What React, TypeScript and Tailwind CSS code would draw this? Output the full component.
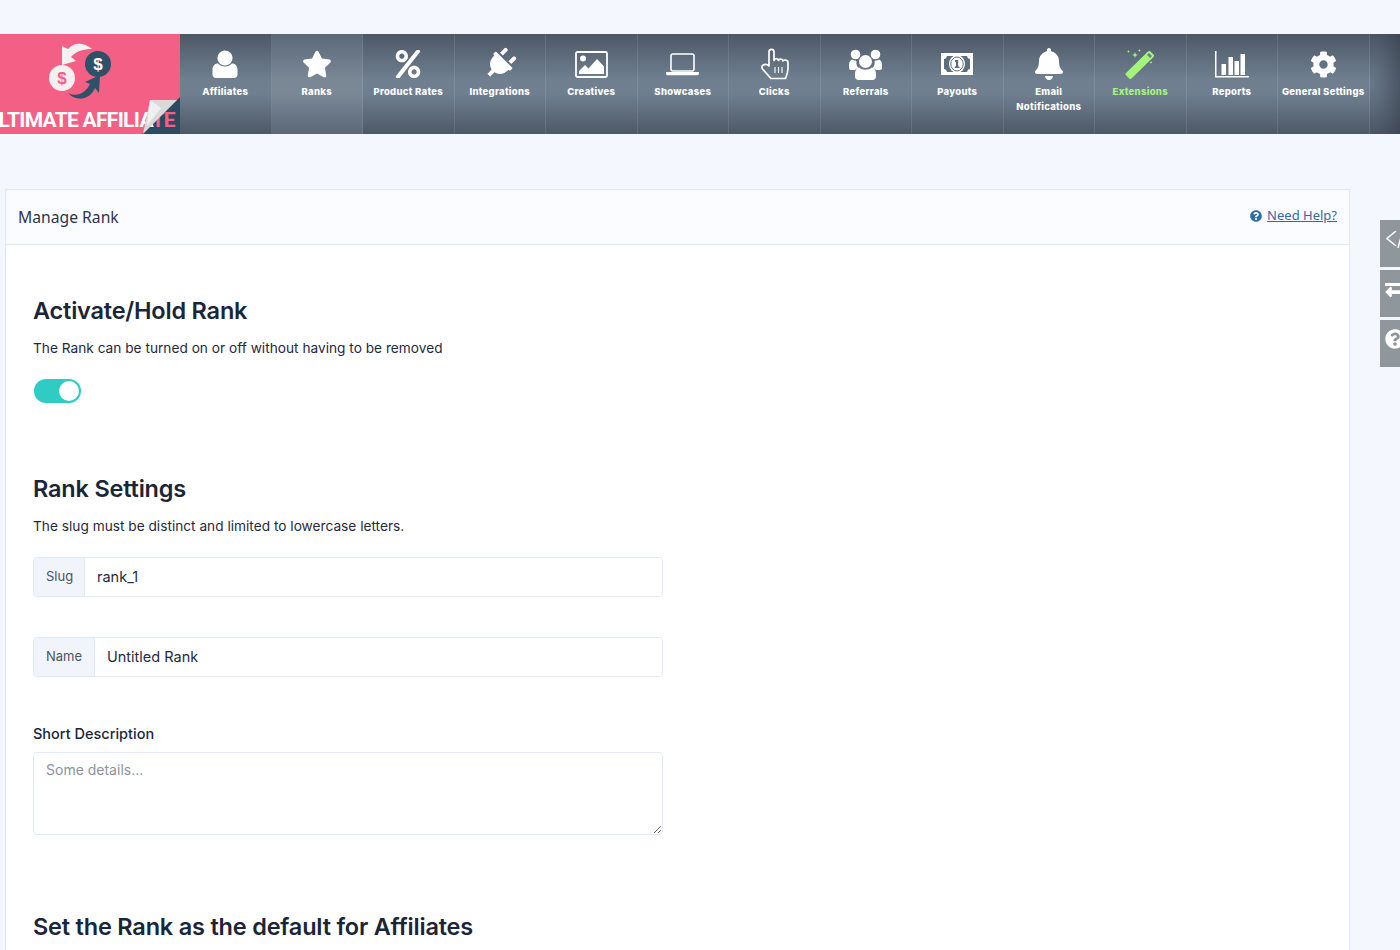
import { FaStar, FaPercent, FaPlug, FaBell, FaCog, FaQuestionCircle, FaLongArrowAltLeft } from 'react-icons/fa';

const UserIcon = () => (
  <svg width="26" height="28" viewBox="0 0 26 28" fill="white">
    <circle cx="13" cy="8" r="7.6" />
    <path d="M6 13.5c2 2 4.2 3 7 3s5-1 7-3c3.400 0 5.500 2.500 5.500 6.500v4.500c0 2-1.500 3.500-3.500 3.500H4c-2 0-3.500-1.500-3.500-3.500V20c0-4 2.100-6.500 5.500-6.500z" />
  </svg>
);

const ImageIcon = () => (
  <svg width="33" height="27" viewBox="0 0 33 27">
    <rect x="1" y="1" width="31" height="25" rx="1.500" fill="none" stroke="white" strokeWidth="1.800" />
    <circle cx="8" cy="7.500" r="3" fill="white" />
    <path d="M4 23v-3l6-6 3.500 3.500L22 8l7 7.500V23z" fill="white" />
  </svg>
);

const LaptopIcon = () => (
  <svg width="33" height="23" viewBox="0 0 33 23">
    <rect x="5" y="1" width="23" height="17" rx="2" fill="none" stroke="white" strokeWidth="1.600" />
    <path d="M0 19h33v1.500c0 1-.8 1.800-1.800 1.800H1.800C.8 22.300 0 21.500 0 20.500z" fill="white" />
  </svg>
);

const HandIcon = () => (
  <svg width="29" height="32" viewBox="0 0 29 32" fill="none" stroke="white" strokeWidth="1.700" strokeLinejoin="round">
    <path d="M9 18V4c0-3.500 5-3.500 5 0v8.500c.5-2.500 4-2.500 4.500 0 .5-2 4-2 4.500.5.500-1.500 5-1.500 5 1.500v6c0 4-1 6.500-2.500 10H11L2.500 21c-2.500-3.500 3-6.500 6.500-3z" />
    <path d="M15 19v6M18.500 19v6M22 19v6" strokeWidth="1.100" />
  </svg>
);

const UsersIcon = () => (
  <svg width="33" height="31" viewBox="0 0 33 31" fill="white">
    <circle cx="6.500" cy="5.500" r="4.800" />
    <circle cx="26.500" cy="5.500" r="4.800" />
    <path d="M0 17c0-4 1-6 3-6.500 1 .8 2 1 3.500 1l1 1c-.5 3 .5 5 2 6.500-1.500.5-2.500 1-3.500 2H2c-1.200 0-2-1-2-2zM33 17c0-4-1-6-3-6.500-1 .8-2 1-3.500 1l-1 1c.5 3-.5 5-2 6.500 1.500.5 2.500 1 3.500 2h4c1.200 0 2-1 2-2z" />
    <circle cx="16.500" cy="12.500" r="6.500" />
    <path d="M10 18.500c2 1.500 4 2.200 6.500 2.200s4.500-.7 6.500-2.200c2.500.5 4 3 4 6.500v2.500c0 2-1.500 3.500-3.500 3.500h-14C7.500 31 6 29.500 6 27.500V25c0-3.500 1.500-6 4-6.500z" />
  </svg>
);

const MoneyIcon = () => (
  <svg width="32" height="22" viewBox="0 0 32 22">
    <rect width="32" height="22" fill="white" />
    <path d="M6 3h20c.5 2 1.500 2.800 3 3v10c-1.500.2-2.500 1-3 3H6c-.5-2-1.500-2.800-3-3V6c1.500-.2 2.500-1 3-3z" fill="#5f6e7d" />
    <ellipse cx="16" cy="11" rx="8" ry="9" fill="white" />
    <ellipse cx="16" cy="11" rx="6.200" ry="7" fill="none" stroke="#5f6e7d" strokeWidth="1" />
    <path d="M14 7h3.200v6.500h1.300V15h-4.700v-1.500h1.200V9l-1 .3z" fill="#5f6e7d" />
  </svg>
);

const WandIcon = () => (
  <svg width="30" height="30" viewBox="0 0 30 30" fill="#a5f47a">
    <path d="M1 24 23 2.500c.8-.8 1.800-.8 2.500 0l3 3c.7.700.7 1.700 0 2.500L6.500 29.500c-.7.700-1.500.7-2.200 0L1 26.200c-.7-.7-.7-1.500 0-2.200z" />
    <path d="M22 6l3 3 2-2-3-3z" fill="#6d7d8c" />
    <path d="M10 3l.8 2.200L13 6l-2.200.8L10 9l-.8-2.200L7 6l2.200-.8zM3.500 1l.4 1.100L5 2.500l-1.100.4L3.500 4l-.4-1.100L2 2.500l1.100-.4zM14.500 0l.4 1.100 1.100.4-1.100.4-.4 1.100-.4-1.100-1.100-.4 1.100-.4zM26 12l.4 1.100 1.100.4-1.100.4-.4 1.100-.4-1.100-1.100-.4 1.100-.4z" />
  </svg>
);

const ReportsIcon = () => (
  <svg width="34" height="27" viewBox="0 0 34 27" fill="white">
    <path d="M0 0h1.500v25H34v1.500H0z" />
    <rect x="6.500" y="13" width="4.500" height="11" />
    <rect x="13.500" y="6" width="4.500" height="18" />
    <rect x="19.500" y="10" width="4.500" height="14" />
    <rect x="25.500" y="3" width="4.500" height="21" />
  </svg>
);

const navItems = [
  { label: 'Affiliates', icon: <UserIcon /> },
  { label: 'Ranks', icon: <FaStar size={30} color="white" />, active: true },
  { label: 'Product Rates', icon: <FaPercent size={28} color="white" /> },
  { label: 'Integrations', icon: <FaPlug size={32} color="white" className="rotate-45" /> },
  { label: 'Creatives', icon: <ImageIcon /> },
  { label: 'Showcases', icon: <LaptopIcon /> },
  { label: 'Clicks', icon: <HandIcon /> },
  { label: 'Referrals', icon: <UsersIcon /> },
  { label: 'Payouts', icon: <MoneyIcon /> },
  { label: 'Email Notifications', icon: <FaBell size={32} color="white" /> },
  { label: 'Extensions', icon: <WandIcon />, green: true },
  { label: 'Reports', icon: <ReportsIcon /> },
  { label: 'General Settings', icon: <FaCog size={27} color="white" /> },
];

const Logo = () => (
  <div className="relative w-[180px] h-full shrink-0 overflow-hidden bg-[#f45f85]">
    <svg className="absolute left-[48px] top-[6px]" width="66" height="62" viewBox="0 0 66 62">
      <path d="M44 9C36 2 26 2 20 9l-6-3 0 19 14-4-5-4c5-6 13-8 21-8z" fill="#f2f2f2" />
      <circle cx="14" cy="38" r="13" fill="#f5f0f0" />
      <circle cx="50" cy="24" r="13" fill="#2e5068" />
      <path d="M20 53C30 58 38 52 42 44l-5-2 15-7-1 18-4-5C42 60 28 62 20 53z" fill="#2e5068" />
      <text x="14" y="44" textAnchor="middle" fontSize="17" fontWeight="700" fill="#f45f85" fontFamily="Liberation Sans, sans-serif">$</text>
      <text x="50" y="30" textAnchor="middle" fontSize="17" fontWeight="700" fill="white" fontFamily="Liberation Sans, sans-serif">$</text>
    </svg>
    <svg className="absolute right-0 bottom-0" width="38" height="37" viewBox="0 0 38 37">
      <path d="M38 0V37H0z" fill="#2e4a60" />
    </svg>
    <div className="absolute right-[5px] bottom-[-2px] whitespace-nowrap font-['Roboto',sans-serif] font-bold text-[21px] tracking-[-0.700px] text-white">
      ULTIMATE AFFILIA<span className="text-[#f45f85]">TE</span>
    </div>
    <svg className="absolute right-0 bottom-0" width="38" height="37" viewBox="0 0 38 37">
      <path d="M8 3 35 3 1 37z" fill="#d9d9d9" />
      <path d="M8 3 19 11 5 29z" fill="#efefef" />
    </svg>
  </div>
);

const SectionTitle = ({ children }: { children: string }) => (
  <h3 className="font-['Inter',sans-serif] font-semibold text-[23.500px] leading-[30px] tracking-[-0.200px] text-[#1b2538]">{children}</h3>
);

const FieldGroup = ({ label, value, addonWidth }: { label: string; value: string; addonWidth: string }) => (
  <div className="flex w-[630px] h-[40px] rounded-[4px] border border-[#dfe9fb] overflow-hidden">
    <span className={`${addonWidth} shrink-0 flex items-center pl-3 bg-[#f1f4fa] border-r border-[#dfe9fb] text-[13px] text-[#4a5568]`}>{label}</span>
    <span className="flex-1 flex items-center pl-3 bg-white text-[14.500px] text-[#1f2a3d]">{value}</span>
  </div>
);

export default function App() {
  return (
    <div className="relative h-[950px] overflow-hidden bg-[#f4f7fe] pt-[34px] font-['Inter',sans-serif]">
      <nav className="flex h-[100px]">
        <Logo />
        {navItems.map((item) => (
          <div
            key={item.label}
            className={`w-[91.500px] shrink-0 flex flex-col items-center border-r border-white/10 ${
              item.active
                ? 'bg-[linear-gradient(180deg,#5a6878_0%,#7a8896_45%,#7a8896_60%,#5a6878_100%)]'
                : 'bg-[linear-gradient(180deg,#4d5866_0%,#6f7f8f_45%,#6f7f8f_60%,#4d5866_100%)]'
            }`}
          >
            <div className="h-[40px] mt-[10px] flex items-center justify-center">{item.icon}</div>
            <div className={`text-center font-extrabold text-[9.500px] leading-[15px] tracking-[0.300px] ${item.green ? 'text-[#a5f47a]' : 'text-white'}`}>
              {item.label}
            </div>
          </div>
        ))}
        <div className="flex-1 bg-[radial-gradient(ellipse_at_left,#6a7a8a_0%,#3d4654_100%)]" />
      </nav>

      <section className="mt-[55px] ml-[5px] w-[1345px] border border-[#e3e8f0] bg-white">
        <div className="h-[55px] flex items-center justify-between pl-3 pr-3 bg-[#fbfcff] border-b border-[#dfe9fb]">
          <span className="pt-[1px] font-['Noto_Sans',sans-serif] text-[15.700px] text-[#2c3648]">Manage Rank</span>
          <span className="mb-[2px] flex items-center gap-[5px] font-['Noto_Sans',sans-serif] text-[13px] text-[#336a9e]">
            <FaQuestionCircle size={12} className="text-[#2e6da4]" />
            <span className="underline">Need Help?</span>
          </span>
        </div>

        <div className="px-[27px] pt-[51px] pb-[20px]">
          <SectionTitle>Activate/Hold Rank</SectionTitle>
          <p className="mt-[12px] text-[13.700px] leading-[20px] text-[#1f2a3d]">The Rank can be turned on or off without having to be removed</p>
          <div className="mt-[21px] ml-[1px] w-[47px] h-[24px] rounded-full bg-[#2fccc4] flex items-center justify-end pr-[2px]">
            <span className="w-[20px] h-[20px] rounded-full bg-white" />
          </div>

          <div className="mt-[71px]">
            <SectionTitle>Rank Settings</SectionTitle>
          </div>
          <p className="mt-[12px] text-[13.700px] leading-[20px] text-[#1f2a3d]">The slug must be distinct and limited to lowercase letters.</p>
          <div className="mt-[21px]">
            <FieldGroup label="Slug" value="rank_1" addonWidth="w-[51px]" />
          </div>
          <div className="mt-[40px]">
            <FieldGroup label="Name" value="Untitled Rank" addonWidth="w-[61px]" />
          </div>

          <label className="block mt-[47px] text-[14.500px] leading-[20px] font-medium text-[#1b2538]">Short Description</label>
          <textarea
            className="block mt-[8px] w-[630px] h-[83px] px-3 py-[6px] rounded-[4px] border border-[#dfe9fb] bg-white text-[14px] outline-none placeholder:text-[#8a93a3]"
            placeholder="Some details..."
          />

          <div className="mt-[77px]">
            <SectionTitle>Set the Rank as the default for Affiliates</SectionTitle>
          </div>
        </div>
      </section>

      <div className="absolute left-[1380px] top-[220px] flex flex-col gap-[3px] w-[20px] overflow-hidden">
        <div className="h-[47px] bg-[#8f979c] pl-[6px] pt-[10px]">
          <svg width="20" height="18" viewBox="0 0 20 18" fill="none" stroke="white" strokeWidth="1.500">
            <path d="M10 1 1 8.500 10 16M17 0 12 18" />
          </svg>
        </div>
        <div className="h-[47px] bg-[#8f979c] relative overflow-hidden">
          <span className="absolute left-[5px] top-[13px] w-[20px] h-[3px] bg-white" />
          <FaLongArrowAltLeft size={24} color="white" className="absolute left-[4px] top-[10px]" />
        </div>
        <div className="h-[47px] bg-[#8f979c] flex items-center pl-[5px] pb-[10px] w-[40px]">
          <FaQuestionCircle size={20} color="white" />
        </div>
      </div>
    </div>
  );
}
